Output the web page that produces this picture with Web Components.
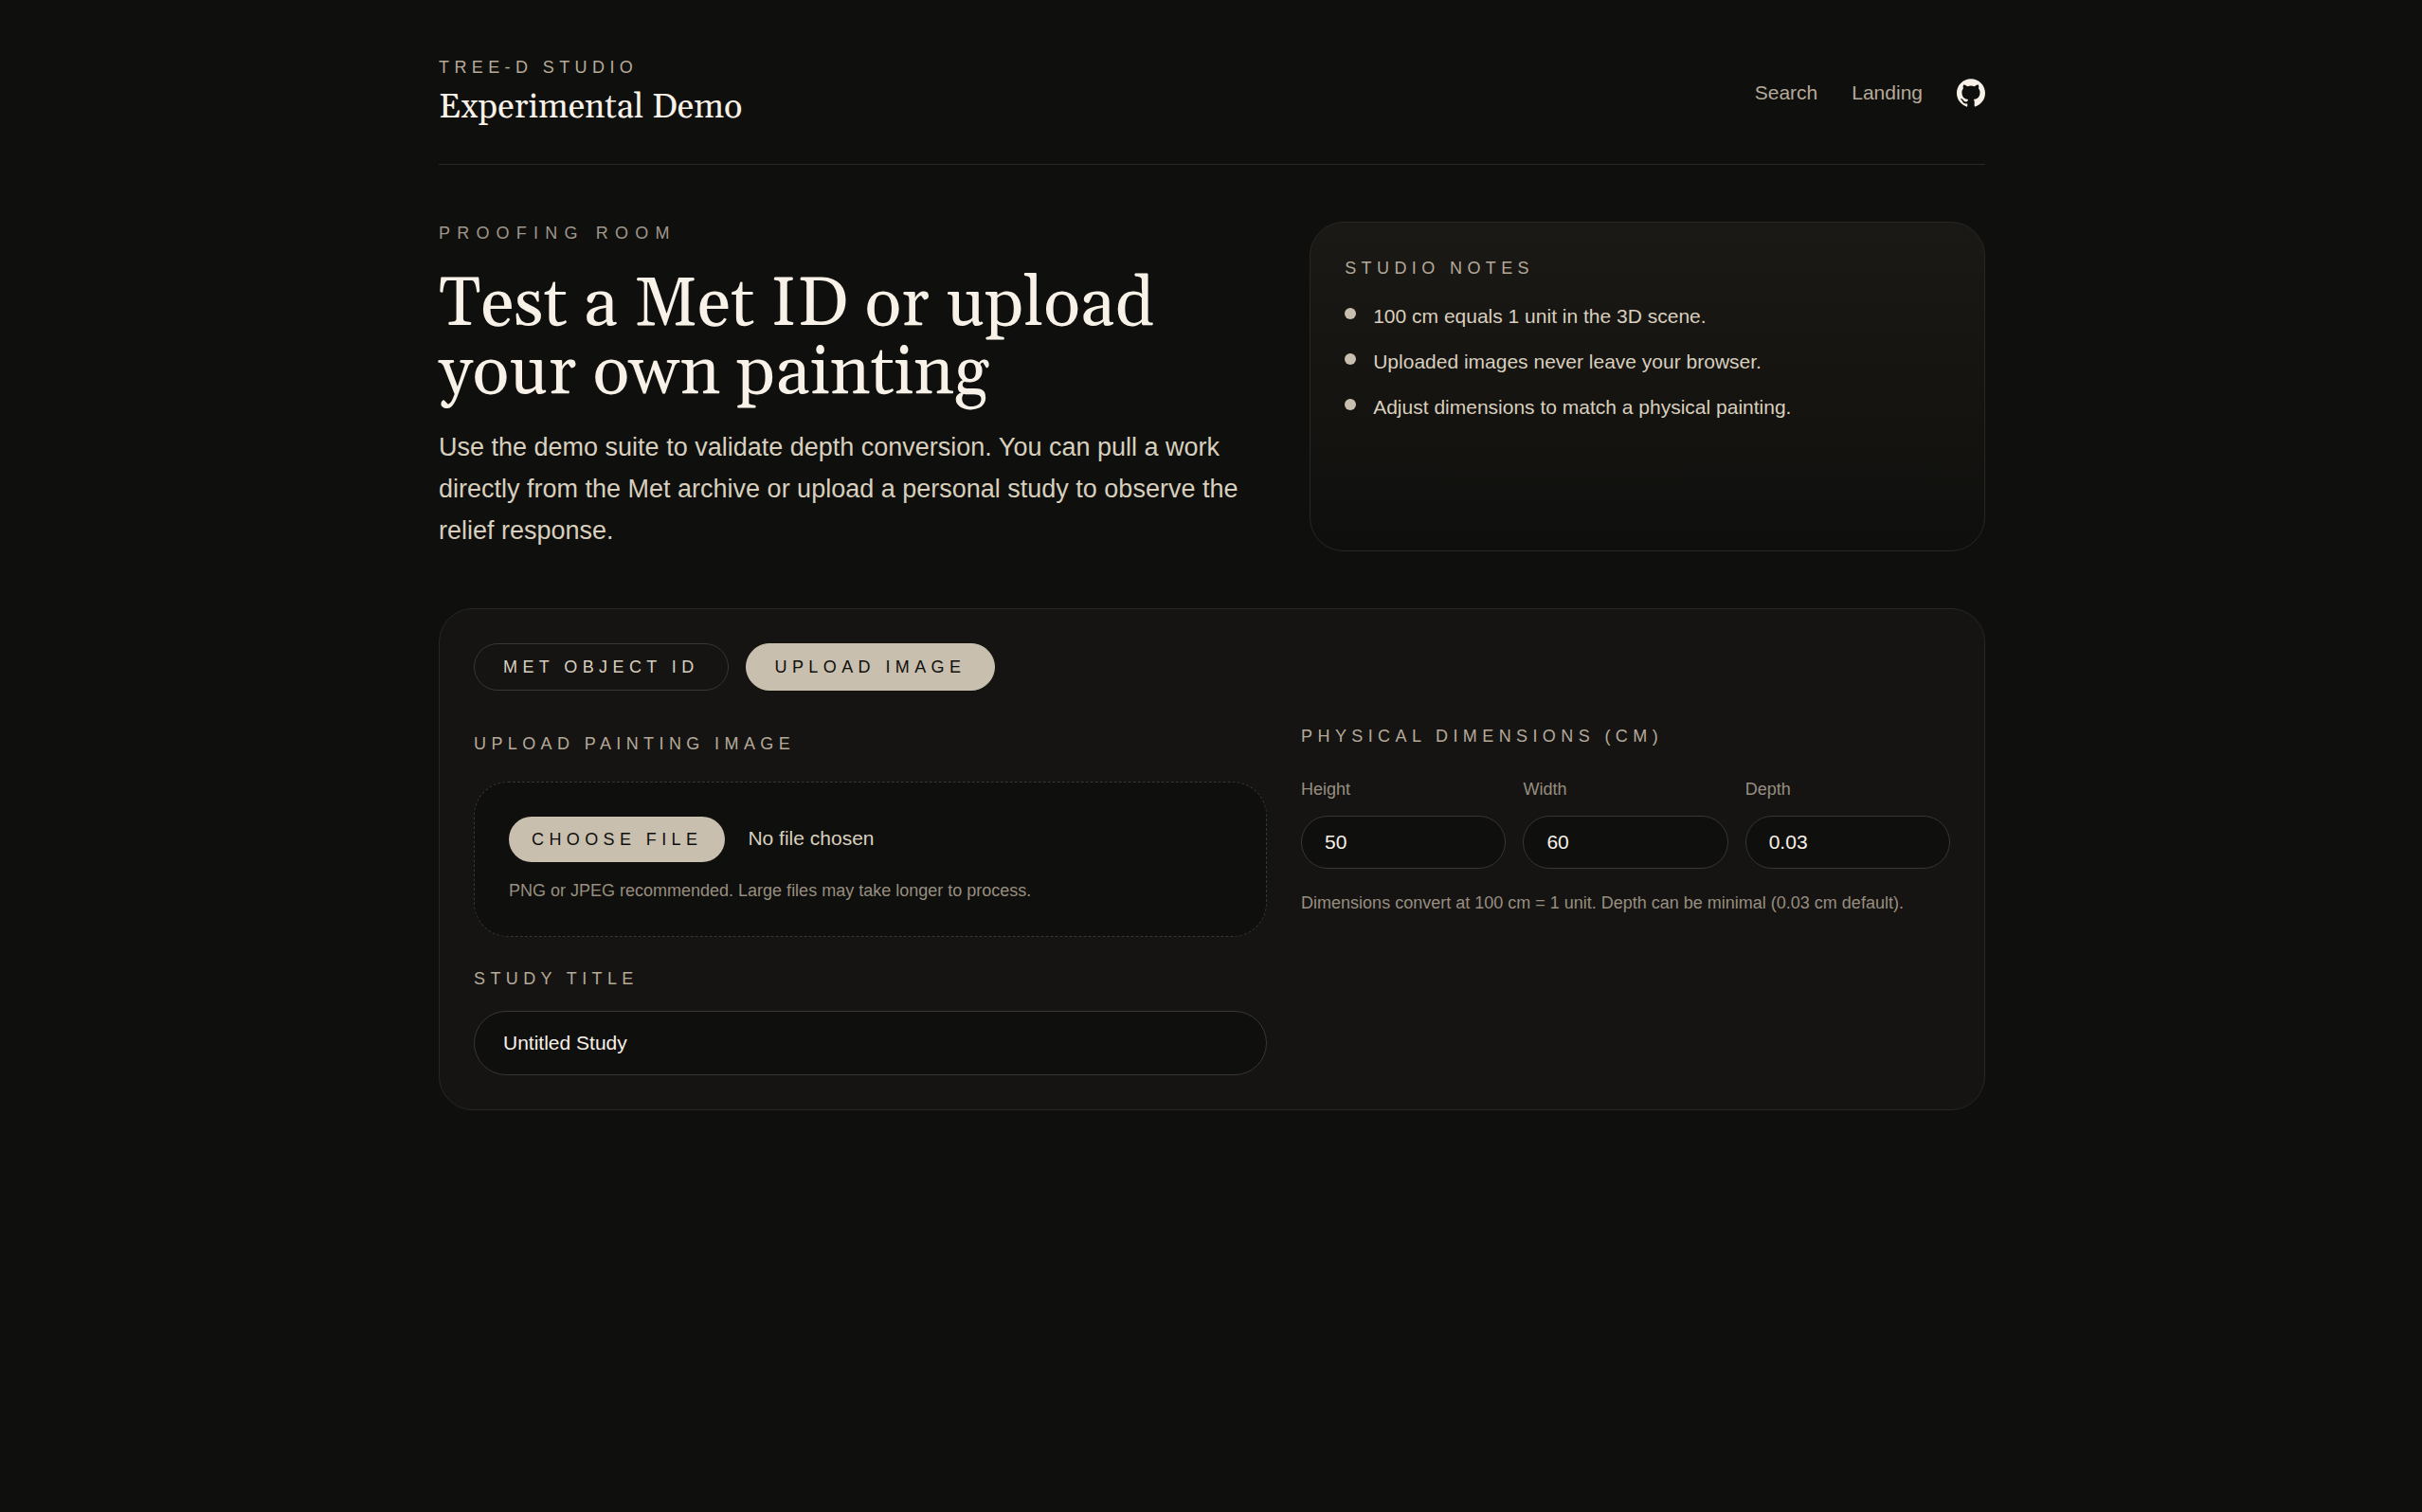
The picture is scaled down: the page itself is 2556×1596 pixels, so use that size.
<!DOCTYPE html>
<html lang="en">
<head>
<meta charset="utf-8">
<meta name="viewport" content="width=device-width, initial-scale=1">
<title>Tree-D Studio</title>
<style>
  :root {
    --ink: #0f0f0d;
    --panel: #151412;
    --line: #292723;
    --line-strong: #3a3631;
    --cream: #f7f1e8;
    --sand: #c9bfae;
    --text: #d8cfbe;
    --label: #b5aa9a;
    --muted: #978e80;
    --serif: Georgia, Gelasio, "Liberation Serif", serif;
    --sans: "Liberation Sans", Arial, sans-serif;
  }
  body {
    margin: 0;
    background: var(--ink);
    color: var(--cream);
    font: 24px/36px var(--sans);
  }
</style>
</head>
<body>
<studio-page></studio-page>

<script>
const define = (name, html, setup) => {
  const template = document.createElement('template');
  template.innerHTML = `<style>
    :host { display: block; }
    *, *::before, *::after { box-sizing: border-box; }
    h1, h2, p, ul { margin: 0; padding: 0; font-weight: 400; }
  </style>` + html;
  customElements.define(name, class extends HTMLElement {
    constructor() {
      super();
      this.attachShadow({ mode: 'open' }).append(template.content.cloneNode(true));
    }
    connectedCallback() { if (setup) setup(this.shadowRoot, this); }
  });
};

define('caps-label', `
  <style>
    :host { font-size: 18px; line-height: 24px; letter-spacing: 0.3em; text-transform: uppercase; color: var(--label); }
    :host([wide]) { letter-spacing: 0.4em; color: #a0968a; }
  </style>
  <slot></slot>`);

define('studio-header', `
  <style>
    header { display: flex; align-items: center; justify-content: space-between; gap: 36px; padding-bottom: 36px; border-bottom: 1px solid var(--line); }
    .brand { display: grid; gap: 8px; }
    .title { font: 36px/46px var(--serif); color: var(--cream); }
    nav { display: flex; align-items: center; gap: 36px; font-size: 21px; line-height: 30px; }
    a { color: var(--label); text-decoration: none; }
    a:hover { color: var(--cream); }
    .icon { display: flex; color: var(--cream); }
    svg { width: 30px; height: 30px; fill: currentColor; }
  </style>
  <header>
    <div class="brand">
      <caps-label>Tree-D Studio</caps-label>
      <p class="title">Experimental Demo</p>
    </div>
    <nav>
      <a href="#search">Search</a>
      <a href="#landing">Landing</a>
      <a class="icon" href="#github" aria-label="GitHub">
        <svg viewBox="0 0 24 24" aria-hidden="true"><path d="M12 .297c-6.63 0-12 5.373-12 12 0 5.303 3.438 9.8 8.205 11.385.6.113.82-.258.82-.577 0-.285-.01-1.04-.015-2.04-3.338.724-4.042-1.61-4.042-1.61C4.422 18.07 3.633 17.7 3.633 17.7c-1.087-.744.084-.729.084-.729 1.205.084 1.838 1.236 1.838 1.236 1.07 1.835 2.809 1.305 3.495.998.108-.776.417-1.305.76-1.605-2.665-.3-5.466-1.332-5.466-5.93 0-1.31.465-2.38 1.235-3.22-.135-.303-.54-1.523.105-3.176 0 0 1.005-.322 3.3 1.23.96-.267 1.98-.399 3-.405 1.02.006 2.04.138 3 .405 2.28-1.552 3.285-1.23 3.285-1.23.645 1.653.24 2.873.12 3.176.765.84 1.23 1.91 1.23 3.22 0 4.61-2.805 5.625-5.475 5.92.42.36.81 1.096.81 2.22 0 1.606-.015 2.896-.015 3.286 0 .315.21.69.825.57C20.565 22.092 24 17.592 24 12.297c0-6.627-5.373-12-12-12"/></svg>
      </a>
    </nav>
  </header>`);

define('studio-intro', `
  <style>
    :host { display: grid; align-content: start; }
    h1 { margin: 28px 0 20px; font: 72px/72px var(--serif); color: var(--cream); }
    p { font-size: 27px; line-height: 44px; color: var(--text); }
  </style>
  <caps-label wide>Proofing Room</caps-label>
  <h1><slot name="title"></slot></h1>
  <p><slot></slot></p>`);

define('note-item', `
  <style>
    :host { display: flex; gap: 18px; font-size: 21px; line-height: 30px; color: var(--text); }
    .dot { flex: none; width: 12px; height: 12px; margin-top: 6px; border-radius: 50%; background: var(--sand); }
  </style>
  <span class="dot"></span><span><slot></slot></span>`);

define('studio-notes', `
  <style>
    aside { display: grid; gap: 24px; align-content: start; height: 100%; padding: 36px; border: 1px solid var(--line); border-radius: 36px; background: linear-gradient(to bottom, #1b1915, var(--ink)); }
    .list { display: grid; gap: 18px; }
  </style>
  <aside>
    <caps-label>Studio Notes</caps-label>
    <div class="list" role="list"><slot></slot></div>
  </aside>`);

define('source-tabs', `
  <style>
    :host { display: flex; flex-wrap: wrap; gap: 18px; }
    button { margin: 0; padding: 12px 30px; border: 1px solid var(--line-strong); border-radius: 25px; background: transparent; color: var(--text); font: 18px/24px var(--sans); letter-spacing: 0.3em; text-transform: uppercase; cursor: pointer; }
    button[aria-pressed="true"] { background: var(--sand); border-color: var(--sand); color: var(--ink); }
  </style>
  <button type="button" aria-pressed="false">Met Object ID</button>
  <button type="button" aria-pressed="true">Upload Image</button>`,
  root => {
    const buttons = root.querySelectorAll('button');
    buttons.forEach(b => b.addEventListener('click', () =>
      buttons.forEach(o => o.setAttribute('aria-pressed', String(o === b)))));
  });

define('upload-field', `
  <style>
    :host { display: grid; gap: 24px; }
    label { font-size: 18px; line-height: 24px; letter-spacing: 0.3em; text-transform: uppercase; color: var(--label); }
    .drop { display: grid; gap: 18px; padding: 36px; border: 1px dashed var(--line-strong); border-radius: 36px; background: var(--ink); }
    input { display: block; width: 100%; font: 21px/30px var(--sans); color: var(--text); }
    input::file-selector-button { margin: 0 24px 0 0; padding: 12px 24px; border: 0; border-radius: 24px; background: var(--sand); color: var(--ink); font: 18px/24px var(--sans); letter-spacing: 0.3em; text-transform: uppercase; }
    p { font-size: 18px; line-height: 24px; color: var(--muted); }
  </style>
  <div><label for="file">Upload painting image</label></div>
  <div class="drop">
    <input id="file" type="file" accept="image/png,image/jpeg">
    <p>PNG or JPEG recommended. Large files may take longer to process.</p>
  </div>`);

define('text-field', `
  <style>
    :host { display: grid; gap: 18px; min-width: 0; }
    :host([compact]) { gap: 12px; }
    label { font-size: 18px; line-height: 24px; letter-spacing: 0.3em; text-transform: uppercase; color: var(--label); }
    :host([compact]) label { letter-spacing: normal; text-transform: none; color: var(--muted); }
    input { display: block; width: 100%; height: 68px; margin: 0; padding: 18px 30px; border: 1px solid var(--line-strong); border-radius: 36px; outline: 0; background: var(--ink); color: var(--cream); font: 21px/30px var(--sans); }
    :host([compact]) input { height: 56px; padding: 12px 24px; }
  </style>
  <div><label for="input"></label></div>
  <input id="input" type="text">`,
  (root, host) => {
    root.querySelector('label').textContent = host.getAttribute('label');
    root.querySelector('input').value = host.getAttribute('value');
  });

define('dimension-fields', `
  <style>
    :host { display: grid; gap: 24px; align-content: start; }
    .row { display: grid; grid-template-columns: repeat(3, minmax(0, 1fr)); gap: 18px; }
    p { font-size: 18px; line-height: 24px; color: var(--muted); }
  </style>
  <caps-label>Physical Dimensions (cm)</caps-label>
  <div class="row">
    <text-field compact label="Height" value="50"></text-field>
    <text-field compact label="Width" value="60"></text-field>
    <text-field compact label="Depth" value="0.03"></text-field>
  </div>
  <p>Dimensions convert at 100 cm = 1 unit. Depth can be minimal (0.03 cm default).</p>`);

define('study-form', `
  <style>
    section { display: grid; gap: 36px; padding: 36px; border: 1px solid var(--line); border-radius: 36px; background: var(--panel); }
    .columns { display: grid; grid-template-columns: 1.1fr 0.9fr; gap: 36px; }
    .source { display: grid; gap: 24px; align-content: start; }
    @media (max-width: 1500px) { .columns { grid-template-columns: 1fr; } }
  </style>
  <section>
    <source-tabs></source-tabs>
    <div class="columns">
      <div class="source">
        <upload-field></upload-field>
        <text-field label="Study title" value="Untitled Study"></text-field>
      </div>
      <dimension-fields></dimension-fields>
    </div>
  </section>`);

define('studio-page', `
  <style>
    main { display: grid; gap: 60px; max-width: 1728px; margin: 0 auto; padding: 59px 47px 59px 49px; }
    .hero { display: grid; grid-template-columns: 1.1fr 0.9fr; gap: 48px; }
    @media (max-width: 1500px) { .hero { grid-template-columns: 1fr; } }
  </style>
  <main>
    <studio-header></studio-header>
    <div class="hero">
      <studio-intro>
        <span slot="title">Test a Met ID or upload your own painting</span>
        Use the demo suite to validate depth conversion. You can pull a work directly from the Met archive or upload a personal study to observe the relief response.
      </studio-intro>
      <studio-notes>
        <note-item role="listitem">100 cm equals 1 unit in the 3D scene.</note-item>
        <note-item role="listitem">Uploaded images never leave your browser.</note-item>
        <note-item role="listitem">Adjust dimensions to match a physical painting.</note-item>
      </studio-notes>
    </div>
    <study-form></study-form>
  </main>`);
</script>
</body>
</html>
